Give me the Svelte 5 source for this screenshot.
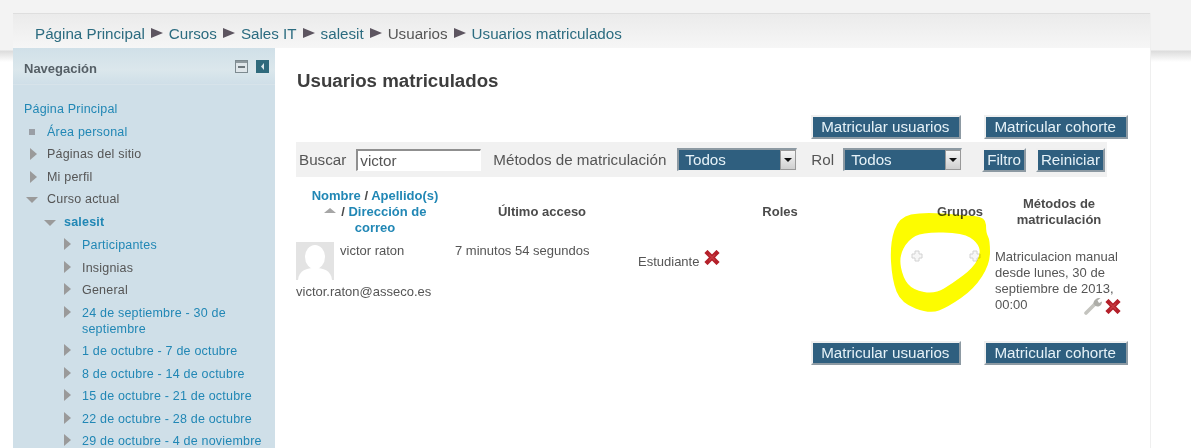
<script>
  const weeks = [
    '24 de septiembre - 30 de septiembre',
    '1 de octubre - 7 de octubre',
    '8 de octubre - 14 de octubre',
    '15 de octubre - 21 de octubre',
    '22 de octubre - 28 de octubre',
    '29 de octubre - 4 de noviembre'
  ];
  const crumbs = [
    { text: 'Página Principal', link: true },
    { text: 'Cursos', link: true },
    { text: 'Sales IT', link: true },
    { text: 'salesit', link: true },
    { text: 'Usuarios', link: false },
    { text: 'Usuarios matriculados', link: true }
  ];

  // hand-traced outline of the yellow marker circle
  const outer = [[33,2],[9,7],[0,33],[2,70],[11,93],[40,104],[58,97],[84,79],[100,54],[100,30],[96,23],[96,7],[73,5]];
  const inner = [[33,22],[18,30],[9,47],[13,68],[23,80],[45,84],[63,73],[83,58],[91,43],[87,32],[73,23]];

  function smooth(pts) {
    const mid = (a, b) => [(a[0] + b[0]) / 2, (a[1] + b[1]) / 2];
    const start = mid(pts[pts.length - 1], pts[0]);
    let d = `M${start[0]} ${start[1]}`;
    pts.forEach((p, i) => {
      const m = mid(p, pts[(i + 1) % pts.length]);
      d += ` Q${p[0]} ${p[1]} ${m[0]} ${m[1]}`;
    });
    return d + ' Z';
  }

  const scribble = smooth(outer) + ' ' + smooth(inner);
</script>

{#snippet cross(cls)}
  <svg class={cls} width="16" height="15" viewBox="0 0 16 15">
    <path d="M3.5 3 L12.5 12 M12.5 3 L3.5 12" stroke="#b4202a" stroke-width="4.4" stroke-linecap="square"/>
    <path d="M5 4.5 L11 10.5 M11 4.5 L5 10.5" stroke="#c63a40" stroke-width="1.4"/>
  </svg>
{/snippet}

{#snippet plus()}
  <svg class="plus" width="12" height="12" viewBox="0 0 12 12">
    <path d="M4 1h4v3h3v4H8v3H4V8H1V4h3z" fill="#f7f7f7" stroke="#d2d2d2"/>
  </svg>
{/snippet}

<div class="page">
  <div class="sheet">
    <nav class="breadcrumb">
      {#each crumbs as crumb, i}
        {#if i > 0}<span class="sep"></span>{/if}
        <span class:crumb-link={crumb.link}>{crumb.text}</span>
      {/each}
    </nav>

    <div class="columns">
      <aside class="sidebar">
        <header class="block-head">
          <h2>Navegación</h2>
          <div class="block-icons">
            <svg width="13" height="13" viewBox="0 0 13 13">
              <rect x="0.5" y="0.5" width="12" height="12" fill="#dfe6ea" stroke="#7d8a90"/>
              <rect x="1" y="1" width="11" height="2" fill="#8e999e"/>
              <rect x="3" y="6" width="7" height="2" fill="#6d777c"/>
            </svg>
            <svg width="13" height="13" viewBox="0 0 13 13">
              <rect width="13" height="13" fill="#2f6a7c"/>
              <path d="M8 3 L5 6.5 L8 10 Z" fill="#dbe8ec"/>
            </svg>
          </div>
        </header>
        <div class="tree">
          <a class="node root" href="#home">Página Principal</a>
          <div class="node l1"><span class="bullet"></span><a href="#area">Área personal</a></div>
          <div class="node l1"><span class="tri"></span>Páginas del sitio</div>
          <div class="node l1"><span class="tri"></span>Mi perfil</div>
          <div class="node l1"><span class="tri down"></span>Curso actual</div>
          <div class="node l2"><span class="tri down"></span><a href="#c" class="strong">salesit</a></div>
          <div class="node l3"><span class="tri"></span><a href="#p">Participantes</a></div>
          <div class="node l3"><span class="tri"></span>Insignias</div>
          <div class="node l3"><span class="tri"></span>General</div>
          {#each weeks as week}
            <div class="node l3"><span class="tri"></span><a href="#w">{week}</a></div>
          {/each}
        </div>
      </aside>

      <main class="content">
        <h1>Usuarios matriculados</h1>

        <div class="actions top">
          <button>Matricular usuarios</button>
          <button>Matricular cohorte</button>
        </div>

        <div class="filters">
          <label for="search">Buscar</label>
          <input id="search" value="victor" />
          <span class="methods-label">Métodos de matriculación</span>
          <div class="fake-select wide">Todos<span class="arrow"></span></div>
          <span class="rol-label">Rol</span>
          <div class="fake-select narrow">Todos<span class="arrow"></span></div>
          <button class="small first">Filtro</button>
          <button class="small">Reiniciar</button>
        </div>

        <div class="table">
          <div class="th name">
            <a href="#n">Nombre</a> / <a href="#a">Apellido(s)</a><br />
            <span class="sort"></span> / <a href="#d">Dirección de correo</a>
          </div>
          <div class="th">Último acceso</div>
          <div class="th">Roles</div>
          <div class="th">Grupos</div>
          <div class="th">Métodos de matriculación</div>

          <div class="td user">
            <div class="user-top">
              <svg width="38" height="38" viewBox="0 0 38 38">
                <rect width="38" height="38" fill="#e3e3e3"/>
                <ellipse cx="19" cy="15" rx="10" ry="12" fill="#fff"/>
                <path d="M2 38 C3 28 11 26 19 26 C27 26 35 28 36 38 Z" fill="#fff"/>
              </svg>
              <span>victor raton</span>
            </div>
            <div class="email">victor.raton@asseco.es</div>
          </div>
          <div class="td access">7 minutos 54 segundos</div>
          <div class="td role">Estudiante {@render cross('role-x')}</div>
          <div class="td groups">{@render plus()}{@render plus()}</div>
          <div class="td method">
            Matriculacion manual desde lunes, 30 de septiembre de 2013, 00:00
            <div class="method-icons">
              <svg width="19" height="18" viewBox="0 0 19 18">
                <path d="M2 16 L11 7" stroke="#c4c4bf" stroke-width="3.6" stroke-linecap="round"/>
                <path d="M9.5 6.5 C9.5 2.5 13.5 0.5 16.5 1 L13.5 3.5 L15 6 L18 4.5 C18 8.5 14.5 10.5 11.5 9 Z" fill="#adada8"/>
              </svg>
              {@render cross('method-x')}
            </div>
          </div>
        </div>

        <div class="actions bottom">
          <button>Matricular usuarios</button>
          <button>Matricular cohorte</button>
        </div>

        <svg class="scribble" width="105" height="106" viewBox="0 0 105 106">
          <path d={scribble} fill="#fdfc00" fill-rule="evenodd"/>
        </svg>
      </main>
    </div>
  </div>
</div>

<style>
  :global(body) {
    margin: 0;
    background: #fff;
    font-family: "Liberation Sans", Arial, sans-serif;
    overflow: hidden;
  }

  .page {
    height: 448px;
    overflow: hidden;
    padding: 13px 41px 0 13px;
    box-sizing: border-box;
    background: linear-gradient(#f3f3f3 0, #f3f3f3 50px, #dcdcdc 51px, #fff 62px);
  }

  .sheet {
    background: #fff;
    box-shadow: 1px 0 0 #efefef;
    height: 100%;
  }

  .breadcrumb {
    height: 35px;
    box-sizing: border-box;
    padding: 4px 0 0 22px;
    border-top: 1px solid #dedede;
    background: linear-gradient(#ebebeb, #f6f6f6);
    font-size: 15.2px;
    line-height: 17px;
    color: #555;
    white-space: nowrap;
    display: flex;
    align-items: center;
  }

  .crumb-link {
    color: #2c6c80;
  }

  .sep {
    width: 0;
    height: 0;
    margin: 0 6px;
    border-top: 5px solid transparent;
    border-bottom: 5px solid transparent;
    border-left: 12px solid #5d5560;
  }

  .columns {
    display: flex;
  }

  .sidebar {
    width: 262px;
    flex: none;
    background: #cfdfe8;
    height: 400px;
    font-size: 12.5px;
  }

  .block-head {
    height: 37px;
    box-sizing: border-box;
    padding: 0 6px 0 11px;
    display: flex;
    justify-content: space-between;
    align-items: flex-start;
    background: linear-gradient(#d0e0e8, #dbe7ec 60%, #cfdfe8);
    border-bottom: 1px solid #d7e3ea;
  }

  .block-head h2 {
    margin: 13px 0 0;
    font-size: 13px;
    line-height: 15px;
    color: #555f66;
    font-weight: bold;
  }

  .block-icons {
    display: flex;
    gap: 8px;
    margin-top: 12px;
  }

  .tree {
    padding-top: 17px;
  }

  .node {
    display: block;
    position: relative;
    line-height: 15px;
    margin-bottom: 7.5px;
    color: #555;
    letter-spacing: 0.2px;
    text-decoration: none;
  }

  .tree a {
    color: #2187b5;
    text-decoration: none;
  }

  .root {
    margin-left: 11px;
  }

  .l1 { padding-left: 34px; }
  .l2 { padding-left: 51px; }
  .l3 { padding-left: 69px; padding-right: 8px; }

  .strong {
    font-weight: bold;
  }

  .tree .node.l3 {
    line-height: 16px;
    margin-bottom: 6.5px;
  }

  .bullet {
    position: absolute;
    left: 16px;
    top: 4px;
    width: 6px;
    height: 6px;
    background: #9a9fa6;
  }

  .tri {
    position: absolute;
    left: 17px;
    top: 1px;
    width: 0;
    height: 0;
    border-top: 6px solid transparent;
    border-bottom: 6px solid transparent;
    border-left: 7px solid #9a9a9a;
  }

  .tri.down {
    left: 13px;
    top: 5px;
    border-left: 6.5px solid transparent;
    border-right: 6.5px solid transparent;
    border-top: 6px solid #9a9a9a;
    border-bottom: 0;
  }

  .l2 .tri.down { left: 31px; }
  .l3 .tri { left: 51px; }

  .content {
    position: relative;
    flex: 1;
    padding: 0 8px 0 21px;
  }

  h1 {
    margin: 22px 0 0 1px;
    font-size: 18.7px;
    line-height: 22px;
    font-weight: bold;
    color: #3d3d3d;
  }

  .actions {
    display: flex;
    justify-content: flex-end;
    gap: 23px;
  }

  .actions.top {
    margin: 23px 14px 0 0;
  }

  .actions.bottom {
    margin: 26px 14px 0 0;
  }

  button {
    height: 24px;
    padding: 0 10px 0 8px;
    font: 15.2px/20px "Liberation Sans", Arial, sans-serif;
    color: #e6f2f8;
    background: #2f5f7f;
    border: 2px solid;
    border-color: #f0f0f0 #8d9aa3 #8d9aa3 #f0f0f0;
    white-space: nowrap;
    box-sizing: border-box;
  }

  .filters {
    display: flex;
    align-items: center;
    height: 35px;
    margin: 3px 35px 0 0;
    padding-left: 3px;
    background: #f1f1f1;
    font-size: 15.2px;
    color: #555;
    white-space: nowrap;
  }

  .filters input {
    width: 125px;
    height: 22px;
    flex: none;
    box-sizing: border-box;
    margin: 0 12px 0 10px;
    padding: 0 2px;
    background: #fff;
    border: 1px solid #fff;
    border-top: 2px solid #8f8f8f;
    border-left: 2px solid #8f8f8f;
    font: 15.2px "Liberation Sans", Arial, sans-serif;
    color: #555;
  }

  .methods-label {
    margin-right: 11px;
  }

  .fake-select {
    position: relative;
    height: 23px;
    flex: none;
    box-sizing: border-box;
    padding-left: 6px;
    line-height: 20px;
    color: #e6f2f8;
    background: #2f5f7f;
    border: 1px solid #f0f0f0;
    border-top: 2px solid #8d9aa3;
    border-left: 2px solid #8d9aa3;
  }

  .wide { width: 120px; margin-right: 14px; }
  .narrow { width: 119px; margin: 0 0 0 9px; }

  .arrow {
    position: absolute;
    right: 0;
    top: 0;
    width: 16px;
    height: 20px;
    background: linear-gradient(#f6f6f6, #cfcfcf);
    border: 1px solid #999;
    box-sizing: border-box;
  }

  .arrow::after {
    content: '';
    position: absolute;
    left: 3px;
    top: 7px;
    border-left: 4px solid transparent;
    border-right: 4px solid transparent;
    border-top: 4px solid #111;
  }

  button.small {
    height: 24px;
    padding: 0 3px;
    margin-left: 10px;
  }

  button.small.first {
    margin-left: 20px;
  }

  .table {
    display: grid;
    grid-template-columns: 158px 176px 300px 60px 144px;
    margin-top: 11px;
    font-size: 13px;
    color: #555;
  }

  .th {
    font-weight: bold;
    text-align: center;
    align-self: center;
    line-height: 16px;
    height: 48px;
    display: flex;
    align-items: center;
    justify-content: center;
    color: #4b4b4b;
  }

  .th:nth-child(5) { padding: 0 28px 0 22px; }

  .th.name {
    display: block;
    padding: 0 12px;
  }

  .th a {
    color: #2187b5;
    text-decoration: none;
  }

  .sort {
    display: inline-block;
    vertical-align: 3px;
    margin-right: 2px;
    border-left: 6px solid transparent;
    border-right: 6px solid transparent;
    border-bottom: 5px solid #a6a6a6;
  }

  .td {
    margin-top: 6px;
    line-height: 16px;
  }

  .user-top {
    display: flex;
    gap: 6px;
  }

  .user-top span {
    margin-top: 1px;
  }

  .email {
    margin-top: 4px;
  }

  .access {
    padding: 1px 0 0 1px;
  }

  .role {
    padding: 8px 0 0 8px;
  }

  .role-x {
    vertical-align: 1px;
    margin-left: 1px;
  }

  .groups {
    display: flex;
    justify-content: space-between;
    padding-top: 8px;
    position: relative;
    left: -19px;
    width: 70px;
    height: 12px;
  }

  .method {
    padding: 7px 8px 0 5px;
  }

  .method-icons {
    display: flex;
    justify-content: flex-end;
    gap: 2px;
    margin-top: -16px;
    margin-right: 5px;
    align-items: center;
  }

  .scribble {
    position: absolute;
    left: 615px;
    top: 162px;
    pointer-events: none;
    mix-blend-mode: multiply;
  }
</style>
